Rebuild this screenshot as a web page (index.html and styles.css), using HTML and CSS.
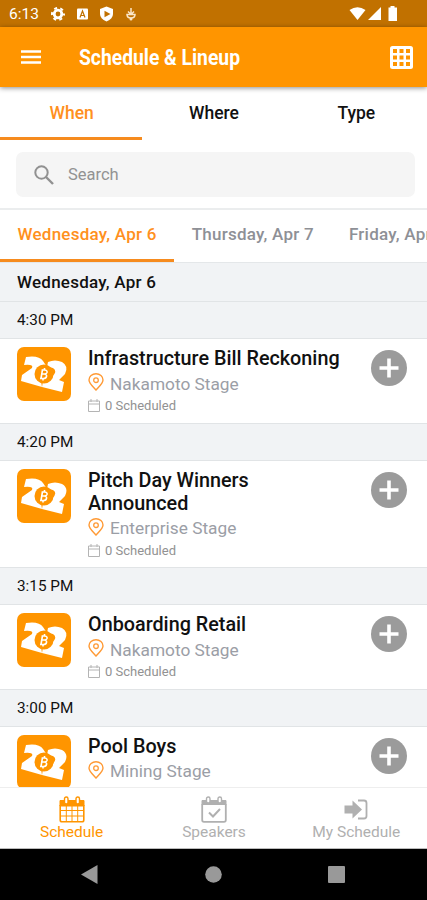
FILE: index.html
```html
<!DOCTYPE html>
<html lang="en">
<head>
    <meta charset="UTF-8">
    <meta name="viewport" content="width=device-width, initial-scale=1.0">
    <title>Schedule &amp; Lineup</title>
    <link rel="stylesheet" href="styles.css">
</head>
<body>
    <svg class="sprite" width="0" height="0">
        <symbol id="logo" viewBox="0 0 54 54">
            <path d="M9 10Q22 8 26 14L30 20L24 34L25 40L4 34L5 28L15 21Q17 17 7 18Z" fill="#fff"/>
            <path d="M31 15Q38 12 45 15Q52 19 48 27L42 33L47 35L45 45L25 40L26 34L35 30Q41 24 36 21L30 20Z" fill="#fff"/>
            <circle cx="27" cy="27" r="9.500" fill="#ff9500"/>
            <path d="M25.500 22.500L24 31.500M24.800 23H28Q30.500 23.500 30 25.500Q29.500 27 27.500 27H24.500M27.500 27Q30 27.500 29.500 29.500Q29 31.500 26.500 31.500H23M27.500 21V23M26 31.500V33.500" fill="none" stroke="#fff" stroke-width="1.600"/>
        </symbol>
        <symbol id="pin" viewBox="0 0 16 18">
            <path d="M8 17C5 13.500 1 10.500 1 7A7 6.300 0 0 1 15 7C15 10.500 11 13.500 8 17Z" fill="none" stroke="#ff9a35" stroke-width="1.400"/>
            <circle cx="8" cy="7.200" r="2.300" fill="none" stroke="#ff9a35" stroke-width="1.300"/>
        </symbol>
        <symbol id="calendar" viewBox="0 0 12 13">
            <path d="M.5 2H11.500V12.500H.5ZM.5 5H11.500M3 0V3M9 0V3" fill="none" stroke="#b4b4b4" stroke-width="1"/>
        </symbol>
        <symbol id="add" viewBox="0 0 36 36">
            <circle cx="18" cy="18" r="18" fill="#9b9b9b"/>
            <path d="M18 8.500V27.500M8.500 18H27.500" stroke="#fff" stroke-width="3.600"/>
        </symbol>
    </svg>

    <div class="status-bar">
        <span class="clock">6:13</span>
        <svg class="status-left" width="90" height="16" viewBox="0 0 90 16">
            <circle cx="7" cy="8" r="3.800" fill="none" stroke="#fff" stroke-width="2.800"/>
            <circle cx="7" cy="8" r="6" fill="none" stroke="#fff" stroke-width="2" stroke-dasharray="3 3.283" stroke-dashoffset="1.500"/>
            <rect x="26" y="2.500" width="11" height="11" rx="1" fill="#fff"/>
            <path d="M29 11.500L31.500 5L34 11.500M30 9.500H33" fill="none" stroke="#c17100" stroke-width="1.200"/>
            <path d="M55.500 0.500L62 3V8Q62 12.500 55.500 15.500Q49 12.500 49 8V3Z" fill="#fff"/>
            <path d="M53.500 4.800L59.500 8L53.500 11.200Z" fill="#c17100"/>
            <path d="M80 2V8M77 5.500L80 8.500L83 5.500M76 8.500Q76 12 80 12Q84 12 84 8.500Z" fill="none" stroke="#fbe6c8" stroke-width="1.500"/>
            <circle cx="80" cy="13" r="1.500" fill="#fbe6c8"/>
        </svg>
        <svg class="status-right" width="50" height="16" viewBox="0 0 50 16">
            <path d="M0.500 4Q8.500-1.500 16.500 4L8.500 14Z" fill="#fff"/>
            <path d="M32 1V14H19Z" fill="#fff"/>
            <path d="M39.500 1.500H41.500V0H45.500V1.500H48V15H39.500Z" fill="#fff"/>
        </svg>
    </div>

    <header class="app-bar">
        <svg width="20" height="14" viewBox="0 0 20 14">
            <path d="M0 1.500H20M0 7H20M0 12.500H20" stroke="#fff" stroke-width="2.400"/>
        </svg>
        <h1>Schedule &amp; Lineup</h1>
        <svg class="grid-icon" width="23" height="23" viewBox="0 0 23 23">
            <rect width="23" height="23" rx="2.500" fill="#fff"/>
            <path d="M3 5H20M3 11.500H20M3 18H20" stroke="#ff9500" stroke-width="4" stroke-dasharray="4 2.500"/>
        </svg>
    </header>

    <nav class="tabs">
        <div class="tab active">When</div>
        <div class="tab">Where</div>
        <div class="tab">Type</div>
    </nav>

    <div class="search">
        <div class="search-box">
            <svg width="20" height="20" viewBox="0 0 20 20">
                <circle cx="7.500" cy="7.500" r="6.200" fill="none" stroke="#919191" stroke-width="2"/>
                <path d="M12 12L19 19" stroke="#919191" stroke-width="2.400"/>
            </svg>
            <span>Search</span>
        </div>
    </div>

    <div class="days">
        <div class="day active">Wednesday, Apr 6</div>
        <div class="day">Thursday, Apr 7</div>
        <div class="day">Friday, Apr 8</div>
    </div>

    <main class="schedule">
        <h2 class="day-heading">Wednesday, Apr 6</h2>

        <div class="time">4:30 PM</div>
        <div class="session">
            <svg class="thumb"><use href="#logo"/></svg>
            <div class="info">
                <h3>Infrastructure Bill Reckoning</h3>
                <div class="stage"><svg><use href="#pin"/></svg><span>Nakamoto Stage</span></div>
                <div class="count"><svg><use href="#calendar"/></svg><span>0 Scheduled</span></div>
            </div>
            <svg class="add"><use href="#add"/></svg>
        </div>

        <div class="time">4:20 PM</div>
        <div class="session">
            <svg class="thumb"><use href="#logo"/></svg>
            <div class="info">
                <h3>Pitch Day Winners<br>Announced</h3>
                <div class="stage"><svg><use href="#pin"/></svg><span>Enterprise Stage</span></div>
                <div class="count"><svg><use href="#calendar"/></svg><span>0 Scheduled</span></div>
            </div>
            <svg class="add"><use href="#add"/></svg>
        </div>

        <div class="time">3:15 PM</div>
        <div class="session">
            <svg class="thumb"><use href="#logo"/></svg>
            <div class="info">
                <h3>Onboarding Retail</h3>
                <div class="stage"><svg><use href="#pin"/></svg><span>Nakamoto Stage</span></div>
                <div class="count"><svg><use href="#calendar"/></svg><span>0 Scheduled</span></div>
            </div>
            <svg class="add"><use href="#add"/></svg>
        </div>

        <div class="time">3:00 PM</div>
        <div class="session">
            <svg class="thumb"><use href="#logo"/></svg>
            <div class="info">
                <h3>Pool Boys</h3>
                <div class="stage"><svg><use href="#pin"/></svg><span>Mining Stage</span></div>
                <div class="count"><svg><use href="#calendar"/></svg><span>0 Scheduled</span></div>
            </div>
            <svg class="add"><use href="#add"/></svg>
        </div>
    </main>

    <nav class="bottom-nav">
        <div class="nav-item active">
            <svg width="26" height="27" viewBox="0 0 26 27" fill="none" stroke="currentColor">
                <path d="M1 4.500H25V10H1Z" fill="currentColor"/>
                <path d="M1.200 9V24Q1.200 25.800 3 25.800H23Q24.800 25.800 24.800 24V9" stroke-width="1.600"/>
                <path d="M2 14.500H24M2 20H24M7.300 10V25M13 10V25M18.700 10V25"/>
                <rect x="5.500" y="1" width="3.500" height="7" rx="1.700" fill="#fff" stroke-width="1.400"/>
                <rect x="17" y="1" width="3.500" height="7" rx="1.700" fill="#fff" stroke-width="1.400"/>
            </svg>
            <span>Schedule</span>
        </div>
        <div class="nav-item">
            <svg width="26" height="27" viewBox="0 0 26 27" fill="none" stroke="currentColor">
                <path d="M1 4.500H25V8.500H1Z" fill="currentColor"/>
                <path d="M1.200 8V24Q1.200 25.800 3 25.800H23Q24.800 25.800 24.800 24V8" stroke-width="1.800"/>
                <path d="M8 16.500L12 20.500L19 13" stroke-width="2"/>
                <rect x="5.500" y="1" width="3.500" height="6" rx="1.700" fill="#fff" stroke-width="1.400"/>
                <rect x="17" y="1" width="3.500" height="6" rx="1.700" fill="#fff" stroke-width="1.400"/>
            </svg>
            <span>Speakers</span>
        </div>
        <div class="nav-item">
            <svg width="24" height="27" viewBox="0 0 24 27">
                <path d="M0.500 9.500H8.500V4.500L18 13.500L8.500 22.500V17.500H0.500Z" fill="currentColor"/>
                <path d="M14 4.500H20Q22.500 4.500 22.500 7V20Q22.500 22.500 20 22.500H14" fill="none" stroke="currentColor" stroke-width="1.800"/>
            </svg>
            <span>My Schedule</span>
        </div>
    </nav>

    <div class="system-nav">
        <svg width="17" height="19" viewBox="0 0 17 19"><path d="M0 9.500L16.500 0V19Z" fill="#999"/></svg>
        <svg width="17" height="17" viewBox="0 0 17 17"><circle cx="8.500" cy="8.500" r="8.300" fill="#999"/></svg>
        <svg width="17" height="17" viewBox="0 0 17 17"><rect width="17" height="17" rx="1" fill="#999"/></svg>
    </div>
</body>
</html>
```

FILE: styles.css
```css
* {
    margin: 0;
    padding: 0;
    box-sizing: border-box;
}

body {
    width: 427px;
    height: 900px;
    overflow: hidden;
    display: flex;
    flex-direction: column;
    font-family: Roboto, sans-serif;
    background: #fff;
    color: #111;
}

svg {
    display: block;
    flex-shrink: 0;
}

.sprite {
    position: absolute;
}

.status-bar {
    height: 27px;
    flex-shrink: 0;
    display: flex;
    align-items: center;
    background: #c17100;
    color: #fff;
    padding: 0 28px 0 9px;
}

.clock {
    width: 42px;
    font-size: 15.5px;
}

.status-right {
    margin-left: auto;
}

.app-bar {
    height: 60px;
    flex-shrink: 0;
    display: flex;
    align-items: center;
    padding: 0 14px 0 21px;
    background: #ff9500;
    color: #fff;
    box-shadow: 0 1px 5px rgba(0, 0, 0, 0.45);
    z-index: 1;
}

.app-bar h1 {
    margin-left: 38px;
    font-size: 21.5px;
    font-weight: 700;
    white-space: nowrap;
    transform: scaleX(0.897);
    transform-origin: left;
}

.grid-icon {
    margin-left: auto;
}

.tabs {
    height: 53px;
    flex-shrink: 0;
    display: grid;
    grid-template-columns: repeat(3, 1fr);
}

.tab {
    padding-left: 1px;
    text-align: center;
    font-size: 17.5px;
    font-weight: 500;
    line-height: 52px;
    height: 53px;
    border-bottom: 3px solid transparent;
}

.tab.active,
.day.active {
    color: #ff9020;
    border-bottom-color: #f68b1e;
}

.search {
    height: 70px;
    flex-shrink: 0;
    padding: 12px 12px 11px 16px;
    border-bottom: 2px solid #ebedee;
}

.search-box {
    height: 45px;
    display: flex;
    align-items: center;
    gap: 14px;
    padding-left: 18px;
    background: #f5f5f5;
    border-radius: 7px;
    color: #929292;
    font-size: 16.5px;
}

.days {
    height: 53px;
    flex-shrink: 0;
    display: flex;
    overflow: hidden;
    border-bottom: 1px solid #e4e7e9;
}

.day {
    flex-shrink: 0;
    padding: 0 17.5px;
    font-size: 17px;
    font-weight: 500;
    letter-spacing: 0.25px;
    line-height: 48px;
    color: #8e9096;
    border-bottom: 3px solid transparent;
}

.schedule {
    height: 524px;
    flex-shrink: 0;
    overflow: hidden;
}

.day-heading {
    height: 38px;
    padding-left: 17px;
    background: #f1f3f5;
    font-size: 17px;
    font-weight: 500;
    letter-spacing: 0.25px;
    line-height: 38px;
}

.time {
    height: 38px;
    padding-left: 17px;
    background: #f1f3f5;
    border-top: 1px solid #e1e4e6;
    border-bottom: 1px solid #e1e4e6;
    font-size: 15.3px;
    line-height: 36px;
}

.session {
    display: flex;
    align-items: flex-start;
    padding: 8px 20px 7.6px 17px;
}

.thumb {
    width: 54px;
    height: 54px;
    border-radius: 7px;
    background: #ff9500;
}

.info {
    flex: 1;
    padding-left: 17px;
}

.info h3 {
    font-size: 19.8px;
    font-weight: 500;
    line-height: 23px;
    white-space: nowrap;
}

.stage,
.count {
    display: flex;
    align-items: center;
}

.stage {
    height: 27px;
    gap: 6px;
    color: #9b9ea6;
    font-size: 17.3px;
}

.stage svg {
    width: 16px;
    height: 18px;
    margin-top: -3px;
}

.count {
    height: 17px;
    gap: 5px;
    margin-bottom: 1px;
    color: #929292;
    font-size: 13px;
}

.count svg {
    width: 12px;
    height: 13px;
}

.add {
    width: 36px;
    height: 36px;
    margin-top: 3px;
}

.bottom-nav {
    height: 62px;
    flex-shrink: 0;
    display: grid;
    grid-template-columns: repeat(3, 1fr);
    border-top: 1px solid #eee;
    border-bottom: 1px solid #bbb;
}

.nav-item {
    display: flex;
    flex-direction: column;
    align-items: center;
    padding: 8px 0 0 1px;
    color: #b0b0b0;
    font-size: 15.5px;
    line-height: 18px;
}

.nav-item.active {
    color: #ff9500;
}

.system-nav {
    flex: 1;
    display: flex;
    align-items: center;
    justify-content: space-between;
    padding: 0 82px 0 81px;
    background: #000;
}
```
